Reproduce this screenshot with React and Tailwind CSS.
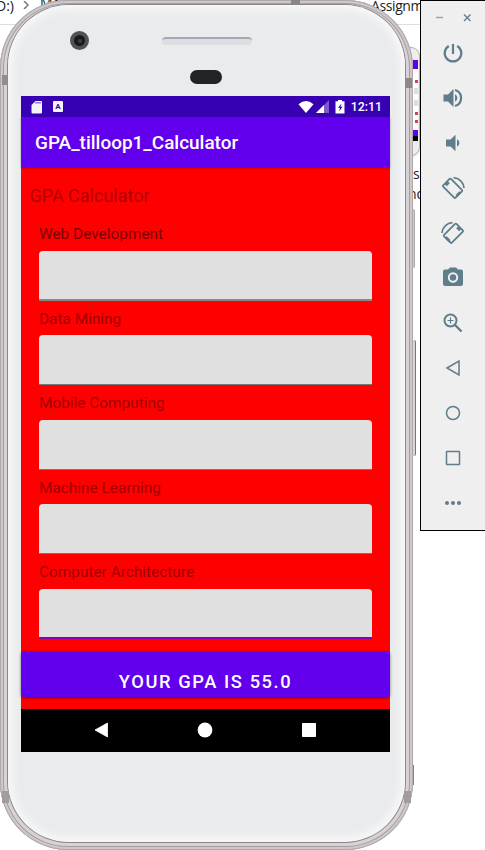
const fields = [
  { label: "Web Development", tone: "text-[#7a0000]", line: "border-b-2 border-[#8f8585]" },
  { label: "Data Mining", tone: "text-[#a00000]", line: "border-b border-[#777777]" },
  { label: "Mobile Computing", tone: "text-[#a00000]", line: "border-b border-[#777777]" },
  { label: "Machine Learning", tone: "text-[#a00000]", line: "border-b border-[#777777]" },
  { label: "Computer Architecture", tone: "text-[#a00000]", line: "border-b-2 border-[#8c00b4]" },
];

function Field({ label, tone, line }) {
  return (
    <div className="flex h-[84.5px] flex-col">
      <div className={`h-[26.6px] text-[15.4px] leading-[20px] ${tone}`}>{label}</div>
      <div className={`h-[50px] rounded-t-[4px] bg-[#e0e0e0] ${line}`} />
    </div>
  );
}

function StatusBar() {
  return (
    <div className="flex h-[21px] items-center bg-[#3700b3] pl-[10px] pr-[8px] text-white">
      <svg className="h-[14px] w-[12px]" viewBox="0 0 12 14" fill="#f5f3fb">
        <path d="M4.5 1H10a1 1 0 0 1 1 1v10.500a1 1 0 0 1-1 1H1.500a1 1 0 0 1-1-1V5z" />
        <path d="M4.500 2h1v1.600h-1zM6.500 2h1v1.600h-1zM8.500 2h1v1.600h-1z" fill="#3700b3" />
      </svg>
      <div className="ml-[10px] flex h-[11px] w-[10px] items-center justify-center rounded-[1px] bg-[#f5f3fb] text-[8px] font-bold leading-none text-[#3700b3]">A</div>
      <svg className="ml-auto h-[14px] w-[16px]" viewBox="0 0 17 14" fill="#fff">
        <path d="M.5 4Q8.500-2.500 16.500 4L8.500 13.500z" />
      </svg>
      <svg className="ml-[2px] h-[13px] w-[13px]" viewBox="0 0 13 13" fill="#fff">
        <path d="M13 0v13H0z" opacity=".35" />
        <path d="M8 5V13H0z" />
      </svg>
      <svg className="ml-[6px] h-[14px] w-[10px]" viewBox="0 0 10 14">
        <path d="M3 0h4v1.300h2.500V13.500H.5V1.300H3z" fill="#fff" />
        <path d="M6.500 3.500 3 7.800H5L4 11.500 7.500 6.800H5.500z" fill="#3700b3" />
      </svg>
      <span className="ml-[6px] pt-[2px] text-[12.300px] font-medium leading-none">12:11</span>
    </div>
  );
}

function Screen() {
  return (
    <div className="flex h-[656px] w-[369px] flex-col bg-[#ff0000]">
      <StatusBar />
      <div className="z-10 flex h-[50px] items-center bg-[#6200ee] pl-[14px] pt-[2px] text-[18.950px] font-medium text-white shadow-[0_1px_2px_rgba(0,0,0,.35)]">GPA_tilloop1_Calculator</div>
      <div className="flex h-[542px] flex-col">
        <div className="h-[57px] pl-[8.500px] pt-[17px] text-[18px] leading-[24px] text-[#b00000]">GPA Calculator</div>
        <div className="flex h-[427px] flex-col pl-[18px] pr-[18px]">
          {fields.map((f) => <Field key={f.label} {...f} />)}
        </div>
        <div className="flex h-[46px] items-center justify-center rounded-[4px] bg-[#6200ee] pt-[15px] text-[18.300px] font-medium tracking-[1.600px] text-white shadow-[0_1px_3px_rgba(0,0,0,.5)]">YOUR GPA IS 55.0</div>
      </div>
      <div className="flex h-[43px] items-center justify-between bg-black pb-px pl-[72px] pr-[73px]">
        <svg className="h-4 w-4" viewBox="0 0 16 16" fill="#fff"><path d="M2 8 14.500 1v14z" stroke="#fff" strokeWidth=".8" strokeLinejoin="round" /></svg>
        <svg className="h-4 w-4" viewBox="0 0 16 16" fill="#fff"><circle cx="8" cy="8" r="7.400" /></svg>
        <svg className="h-4 w-4" viewBox="0 0 16 16" fill="#fff"><rect x="1" y="1" width="14" height="14" rx=".7" /></svg>
      </div>
    </div>
  );
}

function Phone() {
  return (
    <div className="absolute left-0 top-0 flex h-[850px] w-[413px] flex-col rounded-[68px] bg-[#c9c1c4] p-[8px] pt-[5px] shadow-[inset_0_0_0_1px_#b0a8ab,inset_0_0_0_3px_#cfc8cb,inset_0_0_0_4px_#a59da0,inset_0_0_0_7px_#d8d2d5]">
      <div className="flex h-[837px] w-[397px] flex-col rounded-[61px] bg-[#eaebed] pl-[13px] shadow-[0_0_0_1px_#8e8689,inset_0_0_8px_4px_#f8f9fb]">
        <div className="flex h-[91px] flex-col">
          <div className="flex h-[60px] items-center pl-[49px] pt-[11px]">
            <div className="flex size-[19px] items-center justify-center rounded-full border-4 border-[#505256] bg-[#17191c]">
              <div className="size-[4px] rounded-full bg-[#424329]" />
            </div>
            <div className="ml-[73px] h-[8px] w-[90px] rounded-[4px] border-t-2 border-[#a4a8b4] bg-[#dcdee2]" />
          </div>
          <div className="ml-[169px] mt-[5px] h-[14px] w-[32px] rounded-full bg-[#202427]" />
        </div>
        <Screen />
      </div>
    </div>
  );
}

const icons = [
  <g key="power" fill="none" strokeWidth="2.200"><path d="M12 3v10M7.800 5a8.300 8.300 0 1 0 8.400 0" /></g>,
  <g key="up"><path d="M2.500 8.500h4.500l5.500-5.500v18L7 15.500H2.500z" stroke="none" /><path d="M14 8.200a4.200 4.200 0 0 1 0 7.600z" stroke="none" /><path d="M14 4a8.300 8.300 0 0 1 0 16" fill="none" strokeWidth="2.200" /></g>,
  <g key="down" stroke="none"><path d="M5 8.500h4.500l5-4.800v16.600l-5-4.800H5zM16 8.200a4.200 4.200 0 0 1 0 7.600z" /></g>,
  <g key="left" fill="none"><rect x="2.800" y="7.200" width="17.500" height="11" rx="1" transform="rotate(45 12 12.500)" strokeWidth="1.800" /><path d="m4.800 9.200 3-3M15.500 20l3.700-3.700" strokeWidth="2.800" /><path d="M12.500 1.600A11 11 0 0 1 23 12" strokeWidth="1.700" /></g>,
  <g key="right" fill="none"><rect x="3.700" y="7.200" width="17.500" height="11" rx="1" transform="rotate(-45 12 12.500)" strokeWidth="1.800" /><path d="m19.200 9.200-3-3M8.500 20l-3.700-3.700" strokeWidth="2.800" /><path d="M11.500 1.600A11 11 0 0 0 1 12" strokeWidth="1.700" /></g>,
  <g key="camera"><path d="M2 5.500a2 2 0 0 1 2-2h3l2-2h6l2 2h3a2 2 0 0 1 2 2V18a2 2 0 0 1-2 2H4a2 2 0 0 1-2-2z" stroke="none" /><circle cx="12" cy="11.500" r="4.200" stroke="#efefef" strokeWidth="2" /></g>,
  <g key="zoom" fill="none" strokeWidth="2"><circle cx="9.500" cy="9.500" r="6" /><path d="m14 14 6.500 6.500" strokeWidth="2.400" /><path d="M6.500 9.500h6M9.500 6.500v6" strokeWidth="1.200" /></g>,
  <path key="back" d="M6 12 18 5v14z" fill="none" strokeWidth="1.500" />,
  <circle key="home" cx="12" cy="12" r="6.500" fill="none" strokeWidth="1.500" />,
  <rect key="recent" x="5.500" y="5.500" width="13" height="13" rx=".5" fill="none" strokeWidth="1.500" />,
  <g key="more" stroke="none"><circle cx="6" cy="12" r="2" /><circle cx="12" cy="12" r="2" /><circle cx="18" cy="12" r="2" /></g>,
];

function Toolbar() {
  return (
    <div className="absolute left-[420px] top-0 flex h-[531px] w-[66px] flex-col border border-black bg-[#efefef] text-[#607d8b]">
      <div className="flex h-[29px] items-center pl-[15px] pt-[4px]">
        <svg className="h-[10px] w-[36px]" viewBox="0 0 36 10" stroke="currentColor" fill="none">
          <path d="M0 4.500h7" stroke="#93a7b0" strokeWidth="1.500" />
          <path d="m28 1.500 6.500 6.500m0-6.500L28 8" strokeWidth="1.300" />
        </svg>
      </div>
      {icons.map((icon) => (
        <div key={icon.key} className="flex h-[45px] w-[64px] shrink-0 items-center justify-center">
          <svg className="size-[24px]" viewBox="0 0 24 24" fill="currentColor" stroke="currentColor">{icon}</svg>
        </div>
      ))}
    </div>
  );
}

function Explorer() {
  return (
    <div className="h-[850px] w-[485px] bg-white font-['Open_Sans','Noto_Sans',sans-serif] text-[14px] text-[#222]">
      <div className="flex h-[25px] border-b border-[#dedede]">
        <span className="-ml-[4px] -mt-[5px] w-[27px]">D:)</span>
        <svg className="mt-[1px] h-[8px] w-[6px]" viewBox="0 0 6 8" fill="none" stroke="#777" strokeWidth="1.500"><path d="m1 0 4 4-4 4" /></svg>
        <span className="-mt-[8px] ml-[11px]">Mobile</span>
        <span className="-mt-[5px] ml-auto w-[114px] tracking-[-0.4px]">Assignment</span>
      </div>
    </div>
  );
}

function Thumbnail() {
  return (
    <div className="absolute left-[402px] top-[47px] flex h-[109px] w-[18px] flex-col rounded-r-[9px] border border-[#b5b5b5] bg-[#eeeeee] pt-[12px] shadow">
      <div className="h-[9px] w-[15px] bg-[#6200ee]" />
      <div className="flex h-[61px] w-[15px] flex-col items-end justify-around bg-white pb-1 pt-2">
        <i className="size-[3px] bg-[#c64759]" />
        <i className="h-[6px] w-[4px] bg-[#ddd]" />
        <i className="h-[6px] w-[4px] bg-[#ddd]" />
        <i className="size-[3px] bg-[#c64759]" />
        <i className="size-[3px] bg-[#c64759]" />
      </div>
      <div className="h-[6px] w-[15px] bg-[#6200ee]" />
      <div className="h-[5px] w-[15px] bg-black" />
    </div>
  );
}

export default function App() {
  return (
    <main className="relative h-[850px] w-[485px] overflow-hidden bg-white font-['Roboto',sans-serif]">
      <Explorer />
      <Thumbnail />
      <div className="absolute left-[413px] top-[164px] font-['Open_Sans',sans-serif] text-[14px] leading-[20px] text-[#222]">s<br /><span className="-ml-[5px]">nd</span></div>
      <div className="absolute left-[410px] top-[209px] h-[59px] w-[5px] rounded-r-[2px] border-r border-[#aaa] bg-[#cfcaca]" />
      <div className="absolute left-[410px] top-[340px] h-[116px] w-[6px] rounded-r-[2px] border-r border-[#777] bg-[#d8d5d5]" />
      <div className="absolute left-[410px] top-[765px] h-[20px] w-[4px] bg-[#8e8789]" />
      <Phone />
      {/* Antenna bands across the metal frame */}
      <i className="absolute left-[2px] top-[75px] h-[10px] w-[6px] bg-[#938c8e]" />
      <i className="absolute left-[405px] top-[78px] h-[10px] w-[7px] bg-[#8e888a]" />
      <i className="absolute left-[291px] top-0 h-[5px] w-[9px] bg-[#8b8486]" />
      <i className="absolute left-[2px] top-[791px] h-[12px] w-[7px] bg-[#a39c9e]" />
      <i className="absolute left-[404px] top-[791px] h-[12px] w-[7px] bg-[#a39c9e]" />
      <Toolbar />
    </main>
  );
}
